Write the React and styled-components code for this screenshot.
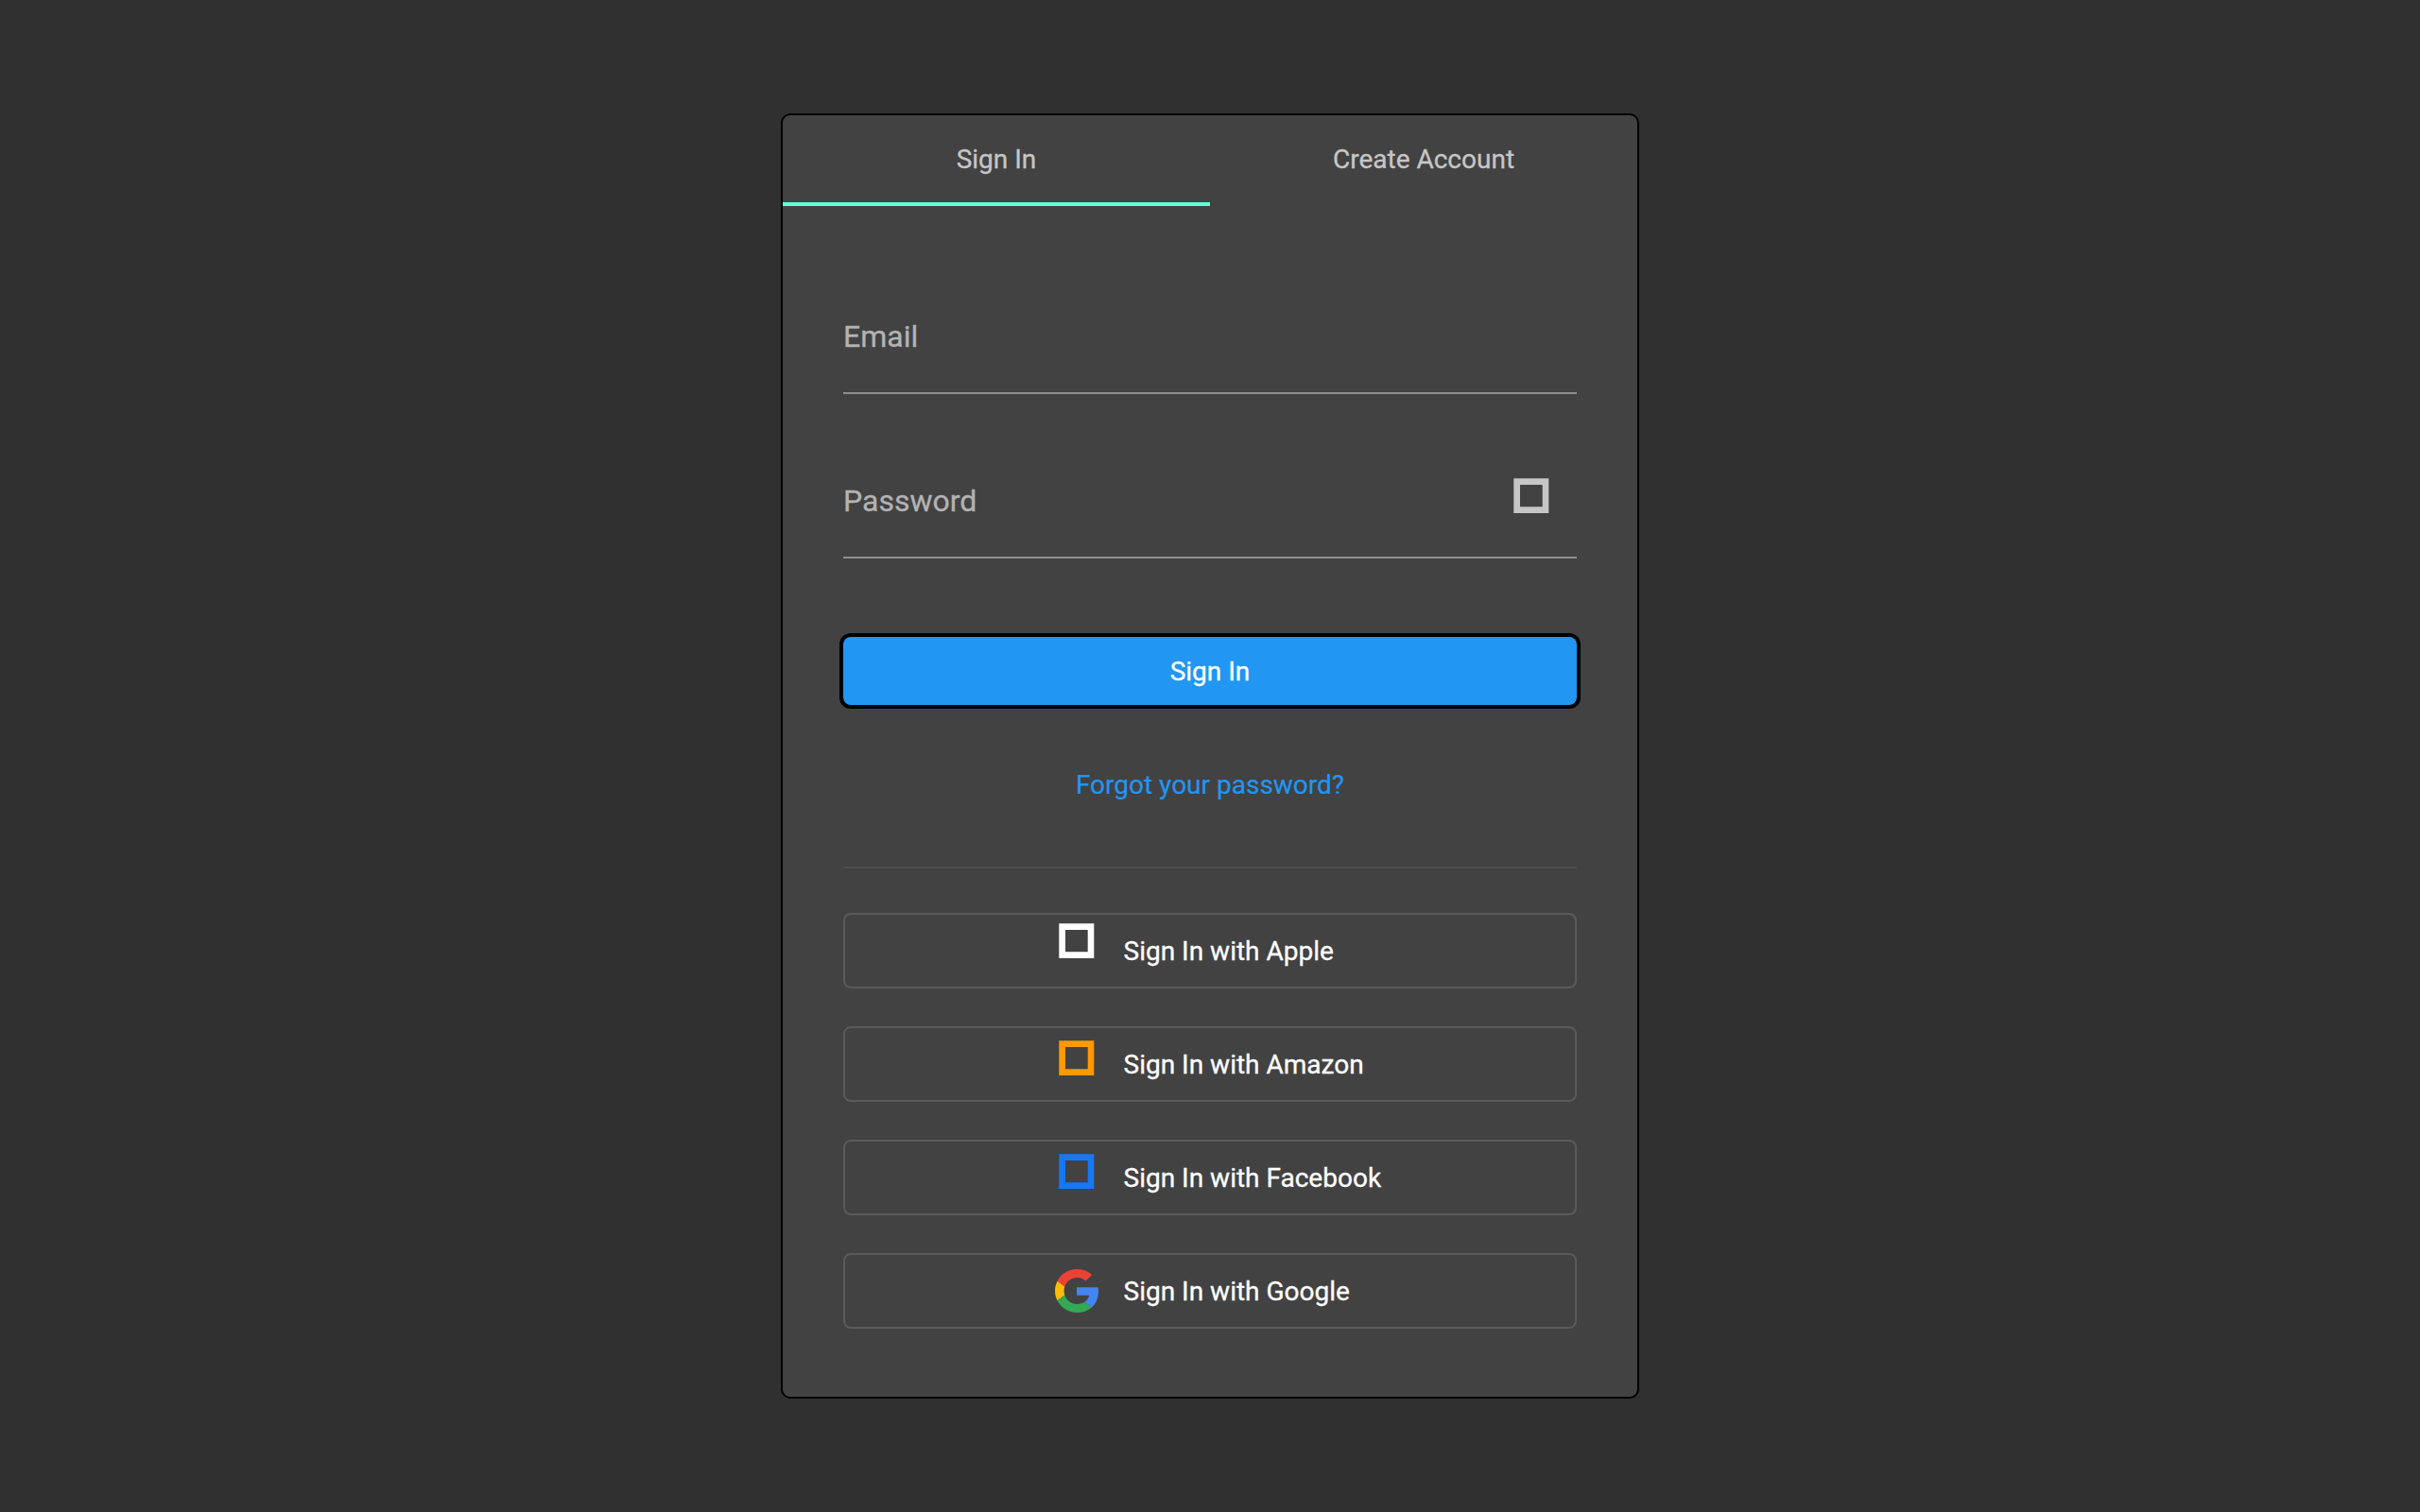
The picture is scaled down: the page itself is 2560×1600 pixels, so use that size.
import React from "react";
import styled, { createGlobalStyle } from "styled-components";

const GlobalStyle = createGlobalStyle`
  * { box-sizing: border-box; }
  body {
    margin: 0;
    background: #303030;
    font-family: Roboto, "Liberation Sans", sans-serif;
  }
`;

const Page = styled.main`
  min-height: 100vh;
  display: flex;
  align-items: center;
  justify-content: center;
`;

const Card = styled.section`
  width: 908px;
  height: 1360px;
  border: 2px solid #000;
  border-radius: 10px;
  background: #424242;
`;

const Tabs = styled.nav`
  display: flex;
  height: 96px;
`;

const Tab = styled.button`
  flex: 1;
  padding: 1px 0 0;
  border: 0;
  border-bottom: 4px solid ${(p) => (p.$active ? "#64ffda" : "transparent")};
  background: none;
  color: #c6c6c6;
  font: 400 28px/33px Roboto, "Liberation Sans", sans-serif;
  -webkit-text-stroke: 0.3px currentColor;
`;

const Form = styled.form`
  display: flex;
  flex-direction: column;
  padding: 103px 64px 0;
`;

const Field = styled.label`
  display: flex;
  align-items: flex-start;
  justify-content: space-between;
  height: 96px;
  margin-bottom: 78px;
  padding: 11px 29px 0 0;
  border-bottom: 2px solid #8e8e8e;
  color: #b3b3b3;
  font-size: 32px;
  line-height: 38px;
`;

const FieldText = styled.span`
  padding-top: 5px;
  -webkit-text-stroke: 0.3px currentColor;
`;

const SubmitButton = styled.button`
  height: 72px;
  margin-top: 5px;
  padding: 1px 0 0;
  border: 0;
  border-radius: 8px;
  background: #2196f3;
  box-shadow: 0 0 0 4px #000;
  color: #fff;
  font: 400 28px/33px Roboto, "Liberation Sans", sans-serif;
  -webkit-text-stroke: 0.3px currentColor;
`;

const ForgotLink = styled.a`
  align-self: center;
  margin-top: 68px;
  color: #2196f3;
  font-size: 28px;
  line-height: 33px;
  -webkit-text-stroke: 0.2px currentColor;
`;

const Divider = styled.hr`
  width: 100%;
  height: 2px;
  margin: 70px 0 47px;
  border: 0;
  background: #4e4e4e;
`;

const Providers = styled.div`
  display: flex;
  flex-direction: column;
  gap: 40px;
`;

const ProviderButton = styled.button`
  display: grid;
  grid-template-columns: 46px 1fr;
  column-gap: 26.5px;
  height: 80px;
  padding: 0 0 0 222px;
  border: 2px solid #5a5a5a;
  border-radius: 8px;
  background: none;
  color: #fff;
  font: 400 28px/33px Roboto, "Liberation Sans", sans-serif;
  text-align: left;
  -webkit-text-stroke: 0.3px currentColor;
`;

const ProviderText = styled.span`
  padding: 22px 0 21px;
`;

const IconSlot = styled.span`
  display: flex;
  justify-content: center;
  padding-top: ${(p) => p.$top}px;
`;

const Icon = styled.svg`
  display: block;
  flex: none;
`;

function SquareIcon({ color }) {
  return (
    <Icon width="38" height="37" viewBox="0 0 38 37">
      <path fill={color} fillRule="evenodd" d="M.3 .3H37.3V37H.3ZM7 7V30.3H30.7V7Z" />
    </Icon>
  );
}

function GoogleIcon() {
  return (
    <Icon width="46" height="46" viewBox="0 0 47 48" preserveAspectRatio="none">
      <path fill="#EA4335" d="M24 9.5c3.540 0 6.710 1.220 9.210 3.600l6.850-6.850C35.900 2.380 30.470 0 24 0 14.620 0 6.510 5.380 2.560 13.220l7.980 6.190C12.430 13.720 17.740 9.500 24 9.500z" />
      <path fill="#4285F4" d="M46.980 24.550c0-1.570-.15-3.090-.38-4.550H23.500v9.020h13.440c-.58 2.960-2.260 5.480-4.780 7.180l7.730 6c4.510-4.180 7.090-10.360 7.090-17.650z" />
      <path fill="#FBBC05" d="M10.530 28.590c-.48-1.450-.76-2.990-.76-4.590s.27-3.140.76-4.590l-7.980-6.190C.92 16.460 0 20.120 0 24c0 3.880.92 7.540 2.560 10.780l7.970-6.190z" />
      <path fill="#34A853" d="M24 48c6.480 0 11.930-2.130 15.890-5.810l-7.730-6c-2.150 1.450-4.920 2.300-8.160 2.300-6.260 0-11.570-4.220-13.470-9.910l-7.980 6.190C6.510 42.620 14.620 48 24 48z" />
    </Icon>
  );
}

const providers = [
  { name: "Apple", color: "#fff", top: 9 },
  { name: "Amazon", color: "#ff9900", top: 13 },
  { name: "Facebook", color: "#1877f2", top: 13 },
  { name: "Google", top: 15 },
];

export default function App() {
  return (
    <Page>
      <GlobalStyle />
      <Card>
        <Tabs>
          <Tab $active>Sign In</Tab>
          <Tab>Create Account</Tab>
        </Tabs>
        <Form>
          <Field>
            <FieldText>Email</FieldText>
          </Field>
          <Field>
            <FieldText>Password</FieldText>
            <SquareIcon color="#c6c6c6" />
          </Field>
          <SubmitButton type="button">Sign In</SubmitButton>
          <ForgotLink>Forgot your password?</ForgotLink>
          <Divider />
          <Providers>
            {providers.map(({ name, color, top }) => (
              <ProviderButton type="button" key={name}>
                <IconSlot $top={top}>
                  {color ? <SquareIcon color={color} /> : <GoogleIcon />}
                </IconSlot>
                <ProviderText>Sign In with {name}</ProviderText>
              </ProviderButton>
            ))}
          </Providers>
        </Form>
      </Card>
    </Page>
  );
}
